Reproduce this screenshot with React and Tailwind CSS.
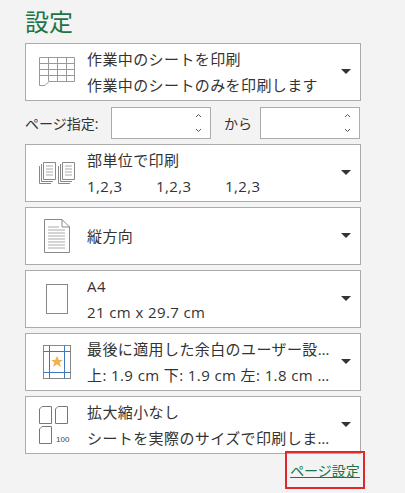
const F = { fontFamily: '"Open Sans","Noto Sans CJK JP",sans-serif' };

function Arrow() {
  return <svg width="10" height="6" viewBox="0 0 10 6" className="mr-[9px] shrink-0"><path d="M0 0H10L5 5Z" fill="#333" /></svg>;
}

function Box({ icon, l1, l2, mt }) {
  return (
    <div className={`flex h-[58px] w-[336px] items-center border border-[#ababab] bg-white ${mt}`}>
      <div className="flex w-[61px] shrink-0 justify-center">{icon}</div>
      <div className="flex min-w-0 flex-1 flex-col justify-center gap-[5px] pr-[10px] text-[15px] leading-[21px] tracking-[0.4px] text-[#333]">
        <div className="truncate">{l1}</div>
        {l2 && <div className="truncate">{l2}</div>}
      </div>
      <Arrow />
    </div>
  );
}

function Spin() {
  return (
    <div className="flex h-[32px] w-[100px] justify-end border border-[#ababab] bg-white pr-[8px]">
      <svg width="7" height="22" viewBox="0 0 7 22" fill="none" stroke="#555" className="mt-[4px]">
        <path d="M1 5L3.5 2.5L6 5M1 17L3.5 19.5L6 17" />
      </svg>
    </div>
  );
}

const g = "#888";
export default function App() {
  return (
    <div style={F} className="h-[493px] w-[405px] bg-[#f3f3f3] pl-[25px] pt-[6px]">
      <div className="text-[24px] leading-[32px] text-[#217346]">設定</div>
      <Box mt="mt-[5px]" l1="作業中のシートを印刷" l2="作業中のシートのみを印刷します" icon={
        <svg width="36" height="30" viewBox="0 0 36 30" fill="none" stroke="#999" strokeWidth="1">
          <path d="M0.5 0.5H35.5V24.5H10L6 28.5H0.5Z" />
          <path d="M0.5 6.5H35.5M0.5 12.5H35.5M0.5 18.5H35.5M9.5 0.5V24.5M18.5 0.5V24.5M27.5 0.5V24.5" />
        </svg>} />
      <div className="mt-[6px] flex h-[32px] w-[336px] items-center text-[14px] text-[#333]">
        <span className="w-[86px]">ページ指定:</span>
        <Spin />
        <span className="ml-[13px] w-[36px]">から</span>
        <Spin />
      </div>
      <Box mt="mt-[5px]" l1="部単位で印刷" l2={<span className="flex"><span className="w-[69px]">1,2,3</span><span className="w-[69px]">1,2,3</span><span>1,2,3</span></span>} icon={
        <svg width="36" height="22" viewBox="0 0 36 22" fill="none" stroke={g}>
          <path d="M0.5 4V21.5H12M2.5 2V19.5H14M4.5 0.5H16.5V17.5H4.5Z" />
          <path d="M7 4H14M7 7H14M7 10H14M7 13H14" stroke="#aaa" />
          <path d="M19.5 4V21.5H31M21.5 2V19.5H33M23.5 0.5H35.5V17.5H23.5Z" />
          <path d="M26 4H33M26 7H33M26 10H33M26 13H33" stroke="#aaa" />
        </svg>} />
      <Box mt="mt-[5px]" l1="縦方向" icon={
        <svg width="26" height="34" viewBox="0 0 26 34" fill="none" stroke={g}>
          <path d="M0.5 0.5H18L25.5 8V33.5H0.5Z M18 0.5V8H25.5" />
          <path d="M4 8H15M4 11H21M4 14H21M4 17H21M4 20H21M4 23H21M4 26H21M4 29H21" stroke="#aaa" />
        </svg>} />
      <Box mt="mt-[5px]" l1="A4" l2="21 cm x 29.7 cm" icon={
        <svg width="22" height="30" viewBox="0 0 22 30" fill="none" stroke={g}><rect x="0.5" y="0.5" width="21" height="29" /></svg>} />
      <Box mt="mt-[5px]" l1="最後に適用した余白のユーザー設定" l2="上: 1.9 cm 下: 1.9 cm 左: 1.8 cm 右: 1.8 cm" icon={
        <svg width="28" height="34" viewBox="0 0 28 34" fill="none">
          <rect x="0.5" y="0.5" width="27" height="33" stroke={g} />
          <path d="M6.5 0.5V33.5M21.5 0.5V33.5M0.5 6.5H27.5M0.5 27.5H27.5" stroke="#3f78c0" />
          <path d="M14 11L15.8 15H20L16.6 17.6L18 22L14 19.3L10 22L11.4 17.6L8 15H12.2Z" fill="#f0b350" />
        </svg>} />
      <Box mt="mt-[5px]" l1="拡大縮小なし" l2="シートを実際のサイズで印刷します" icon={
        <svg width="36" height="38" viewBox="0 0 36 38" fill="none" stroke="#777">
          <path d="M0.5 3V17.5H12.5V0.5H3Z" /><path d="M16.5 3V17.5H28.5V0.5H19Z" /><path d="M0.5 23V37.5H12.5V20.5H3Z" />
          <text x="17" y="36" fontSize="8" fill="#444" stroke="none" fontFamily="Liberation Sans,sans-serif">100</text>
        </svg>} />
      <div className="flex w-[340px] justify-end">
        <div className="-mt-[3px] flex h-[38px] w-[80px] items-center justify-center border-2 border-[#e0282a]">
          <span className="text-[14px] text-[#217346] underline">ページ設定</span>
        </div>
      </div>
    </div>
  );
}
